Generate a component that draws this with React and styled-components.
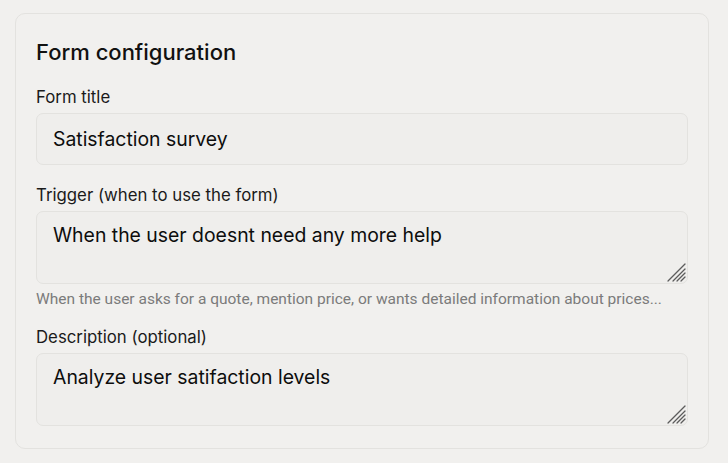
import React from "react";
import styled, { createGlobalStyle } from "styled-components";

const Global = createGlobalStyle`
  html, body { margin: 0; padding: 0; background: #f1f0ee; }
  body { font-family: Inter, "Noto Sans", sans-serif; color: #111; }
  * { box-sizing: border-box; }
`;

const Page = styled.div`
  padding: 13px 19px 16px 15px;
`;

const Card = styled.section`
  border: 1px solid #e3e2df;
  border-radius: 10px;
  background: #f1f0ee;
  padding: 24px 20px 22px 20px;
  display: flex;
  flex-direction: column;
`;

const Title = styled.h2`
  margin: 0 0 20px;
  font-size: 22px;
  line-height: 28px;
  font-weight: 500;
  color: #111;
`;

const Field = styled.div`
  display: flex;
  flex-direction: column;
  gap: 5px;
  margin-bottom: ${(p) => p.$mb ?? 20}px;
`;

const Label = styled.label`
  font-size: 16.8px;
  line-height: 22px;
  color: #1a1a1a;
`;

const baseInput = `
  width: 100%;
  border: 1px solid #e3e2df;
  border-radius: 7px;
  background: #efeeec;
  font-family: Inter, "Noto Sans", sans-serif;
  font-size: 19.4px;
  color: #0d0d0d;
  outline: none;
  padding: 0 16px;
`;

const TextInput = styled.input`
  ${baseInput}
  height: 52px;
`;

const AreaWrap = styled.div`
  position: relative;
`;

const TextArea = styled.textarea`
  ${baseInput}
  height: 73px;
  padding-top: 11px;
  line-height: 24px;
  resize: none;
  display: block;
`;

const Grip = styled.svg`
  position: absolute;
  right: 2px;
  bottom: 2px;
  width: 19px;
  height: 19px;
  pointer-events: none;
`;

const Help = styled.div`
  font-family: Roboto, sans-serif;
  font-size: 15.5px;
  line-height: 20px;
  color: #7b7b7b;
`;

function ResizeGrip() {
  return (
    <Grip viewBox="0 0 19 19">
      <g stroke="#5c5c5c" strokeWidth="1.2" strokeLinecap="round">
        <line x1="1" y1="18" x2="18" y2="1" />
        <line x1="6" y1="18" x2="18" y2="6" />
        <line x1="10" y1="18" x2="18" y2="10" />
        <line x1="14" y1="18" x2="18" y2="14" />
      </g>
    </Grip>
  );
}

function Area({ value }) {
  return (
    <AreaWrap>
      <TextArea defaultValue={value} />
      <ResizeGrip />
    </AreaWrap>
  );
}

export default function App() {
  return (
    <>
      <Global />
      <Page>
        <Card>
          <Title>Form configuration</Title>
          <Field $mb={19}>
            <Label>Form title</Label>
            <TextInput defaultValue="Satisfaction survey" />
          </Field>
          <Field $mb={17}>
            <Label>Trigger (when to use the form)</Label>
            <Area value="When the user doesnt need any more help" />
            <Help>When the user asks for a quote, mention price, or wants detailed information about prices...</Help>
          </Field>
          <Field $mb={0}>
            <Label>Description (optional)</Label>
            <Area value="Analyze user satifaction levels" />
          </Field>
        </Card>
      </Page>
    </>
  );
}
